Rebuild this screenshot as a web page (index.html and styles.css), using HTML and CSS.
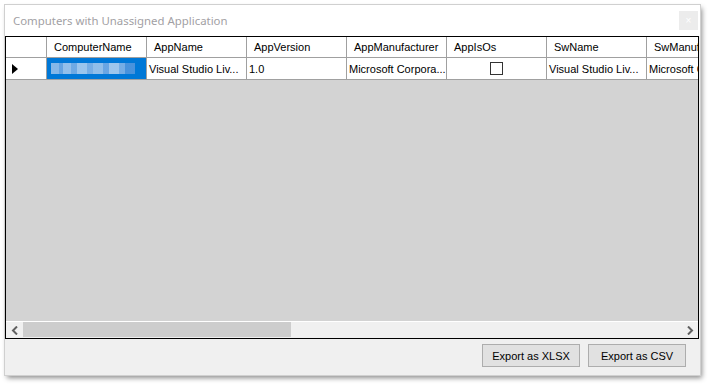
FILE: index.html
```html
<!DOCTYPE html>
<html>
<head>
<meta charset="utf-8">
<link rel="stylesheet" href="styles.css">
</head>
<body>
<div class="window">
  <div class="titlebar">
    <span class="title">Computers with Unassigned Application</span>
    <span class="close">×</span>
  </div>
  <div class="grid">
    <div class="table">
      <div class="row head">
        <div class="cell rh"></div>
        <div class="cell hc">ComputerName</div>
        <div class="cell hc">AppName</div>
        <div class="cell hc">AppVersion</div>
        <div class="cell hc">AppManufacturer</div>
        <div class="cell hc">AppIsOs</div>
        <div class="cell hc">SwName</div>
        <div class="cell hc last">SwManufacturer</div>
      </div>
      <div class="row data">
        <div class="cell rh"><svg class="arrow" width="6" height="10" viewBox="0 0 6 10"><path d="M0 0 L6 5 L0 10 Z" fill="#000"/></svg></div>
        <div class="cell sel"><span class="blur"></span></div>
        <div class="cell">Visual Studio Liv...</div>
        <div class="cell">1.0</div>
        <div class="cell">Microsoft Corpora...</div>
        <div class="cell center"><span class="check"></span></div>
        <div class="cell">Visual Studio Liv...</div>
        <div class="cell last">Microsoft Corporation</div>
      </div>
      <div class="empty"></div>
    </div>
    <div class="hscroll">
      <div class="sbtn"><svg width="8" height="9" viewBox="0 0 8 9"><path d="M6 0.5 L2 4.5 L6 8.5" fill="none" stroke="#606060" stroke-width="2"/></svg></div>
      <div class="track"><div class="thumb"></div></div>
      <div class="sbtn"><svg width="8" height="9" viewBox="0 0 8 9"><path d="M2 0.5 L6 4.5 L2 8.5" fill="none" stroke="#606060" stroke-width="2"/></svg></div>
    </div>
  </div>
  <div class="footer">
    <button class="btn">Export as XLSX</button>
    <button class="btn">Export as CSV</button>
  </div>
</div>
</body>
</html>
```

FILE: styles.css
```css
html, body {
  margin: 0;
  padding: 0;
  background: #ffffff;
}
body {
  width: 708px;
  height: 384px;
  overflow: hidden;
  font-family: "Liberation Sans", Arial, sans-serif;
}
.window {
  margin: 5px 0 0 5px;
  width: 695px;
  height: 370px;
  background: #f0f0f0;
  display: flex;
  flex-direction: column;
  box-shadow: 2px 3px 5px rgba(0,0,0,0.45);
  outline: 1px solid #d0d0d0;
}
.titlebar {
  height: 31px;
  flex: none;
  background: #ffffff;
  display: flex;
  align-items: center;
  justify-content: space-between;
  padding: 0 2px 0 8px;
  box-sizing: border-box;
}
.title {
  font-family: "Noto Sans", "Open Sans", sans-serif;
  font-size: 11.4px;
  color: #a29fa4;
  margin-top: 0;
}
.close {
  width: 19px;
  height: 19px;
  background: #ececec;
  color: #ffffff;
  font-size: 10px;
  line-height: 19px;
  text-align: center;
  margin-top: -1px;
}
.grid {
  height: 301px;
  flex: none;
  border: 1px solid #000;
  margin-right: 1px;
  background: #d3d3d3;
  display: flex;
  flex-direction: column;
  overflow: hidden;
}
.table {
  flex: 1;
  display: flex;
  flex-direction: column;
  overflow: hidden;
}
.row {
  display: flex;
  flex: none;
  background: #fff;
}
.row.head {
  height: 21px;
}
.row.data {
  height: 22px;
}
.cell {
  flex: none;
  width: 100px;
  box-sizing: border-box;
  border-right: 1px solid #a0a0a0;
  border-bottom: 1px solid #a0a0a0;
  font-size: 11px;
  color: #000;
  white-space: nowrap;
  overflow: hidden;
  display: flex;
  align-items: center;
  padding: 0 0 0 2px;
}
.cell.rh {
  width: 41px;
  padding-left: 6px;
}
.cell.hc {
  padding-left: 7px;
}
.cell.last {
  width: 52px;
  border-right: none;
}
.cell.center {
  justify-content: center;
}
.cell.sel {
  background: #0078d7;
  border-right: 1px solid #a0a0a0;
  padding: 0 0 0 4px;
}
.blur {
  display: block;
  width: 84px;
  height: 11px;
  background:
    linear-gradient(90deg, #8dbbe9 0 8px, #6aa6e3 8px 12px, #9ac3ec 12px 20px, #74ace5 20px 26px, #a3c9ee 26px 36px, #7eb1e6 36px 42px, #98c2eb 42px 52px, #6fa8e4 52px 58px, #a6caee 58px 68px, #7cb0e6 68px 74px, #4d94dd 74px 84px);
  opacity: 0.95;
}
.check {
  width: 11px;
  height: 11px;
  border: 1px solid #333;
  background: #fff;
  margin-left: -2px;
}
.arrow {
  display: block;
}
.empty {
  flex: 1;
  background: #d3d3d3;
}
.hscroll {
  height: 16px;
  border-top: 1px solid #ffffff;
  display: flex;
  background: #f0f0f0;
  flex: none;
}
.sbtn {
  width: 17px;
  display: flex;
  align-items: center;
  justify-content: center;
}
.track {
  flex: 1;
  padding: 0;
}
.thumb {
  width: 268px;
  height: 15px;
  background: #cdcdcd;
}
.footer {
  flex: 1;
  display: flex;
  justify-content: flex-end;
  align-items: flex-start;
  padding: 5px 14px 0 0;
  gap: 8px;
}
.btn {
  width: 98px;
  height: 23px;
  background: #e1e1e1;
  border: 1px solid #adadad;
  font-family: "Liberation Sans", Arial, sans-serif;
  font-size: 11px;
  color: #000;
  padding: 0;
  margin: 0;
}
```
